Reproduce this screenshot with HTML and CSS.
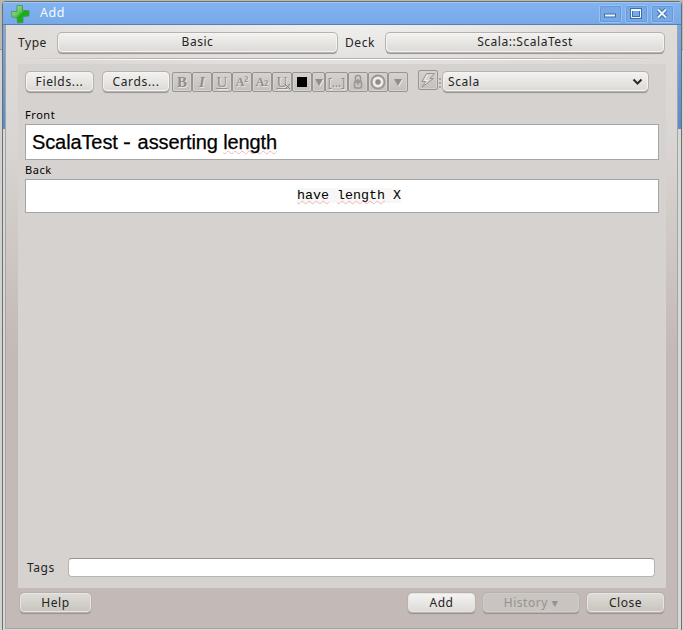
FILE: index.html
```html
<!DOCTYPE html>
<html lang="en">
<head>
<meta charset="utf-8">
<title>Add</title>
<link rel="stylesheet" href="styles.css">
</head>
<body>
<main class="window">
  <header class="titlebar">
    <svg class="logo" width="20" height="20" viewBox="0 0 20 20">
      <defs><linearGradient id="plus" x1="0" y1="0" x2="1" y2="1"><stop offset="0" stop-color="#b5e8a4"/><stop offset=".42" stop-color="#65c65c"/><stop offset=".55" stop-color="#14ae14"/><stop offset="1" stop-color="#38ad38"/></linearGradient></defs>
      <path d="M7 1.500H12.500V6.500L19 6.700V12L13 12.500V18.500L7.500 19 7 13.500 2 13 1.500 7.500H7Z" fill="url(#plus)" stroke="#48914b" stroke-width=".8"/>
    </svg>
    <h1 class="title">Add</h1>
    <div class="controls">
      <button class="control" aria-label="Minimize"><svg width="22" height="17"><path d="M5 10.500H17" stroke="#416cab" stroke-width="4"/><path d="M6 10.500H16" stroke="#edf5ff" stroke-width="2"/></svg></button>
      <button class="control" aria-label="Maximize"><svg width="22" height="17" fill="none"><rect x="6.500" y="4.500" width="9" height="8" stroke="#416cab" stroke-width="3"/><path d="M6.500 4V12.500H15.500V4" stroke="#edf5ff"/><path d="M6 5H16" stroke="#edf5ff" stroke-width="2"/></svg></button>
      <button class="control" aria-label="Close window"><svg width="22" height="17" fill="none"><path d="M7 4.500 15 12.500M15 4.500 7 12.500" stroke="#416cab" stroke-width="4"/><path d="M7 4.500 15 12.500M15 4.500 7 12.500" stroke="#edf5ff" stroke-width="2"/></svg></button>
    </div>
  </header>
  <div class="client">
    <div class="choosers">
      <span class="type-label">Type</span><button class="button type">Basic</button>
      <span class="deck-label">Deck</span><button class="button deck">Scala::ScalaTest</button>
    </div>
    <hr class="rule">
    <section class="editor">
      <div class="toolbar">
        <button class="button fields">Fields...</button><button class="button cards">Cards...</button>
        <div class="tools">
          <button class="tool bold">B</button>
          <button class="tool italic">I</button>
          <button class="tool underline">U</button>
          <button class="tool script">A<sup>2</sup></button>
          <button class="tool script">A<sub>2</sub></button>
          <button class="tool underline">U<svg class="clear" width="7" height="7"><path d="M1 1 6 6M6 1 1 6" stroke="#858280"/></svg></button>
          <button class="tool"><span class="swatch"></span></button>
          <button class="tool narrow"><span class="arrow"></span></button>
          <button class="tool cloze">[...]</button>
          <button class="tool"><svg width="12" height="16" fill="none" stroke="#999693" stroke-width="1.500"><rect x="3.500" y="1.500" width="5" height="7" rx="2"/><rect x="2.500" y="7" width="7" height="7" rx="2"/><path d="M6 5V11"/></svg></button>
          <button class="tool"><svg width="18" height="18"><circle cx="9" cy="9" r="6.500" fill="#eeecea" stroke="#999693" stroke-width="2"/><circle cx="9" cy="9" r="2.700" fill="#8f8c89"/></svg></button>
          <button class="tool"><span class="arrow"></span></button>
        </div>
        <button class="tool bolt"><svg width="18" height="18"><path d="M7.500 2.500H15.500L11 7.500H14.500L3 16 7 10.500H3Z" fill="#d6d3cf" stroke="#999693"/><path d="M8.500 4 5.500 9.500H9L6 13" fill="none" stroke="#efedeb"/></svg></button>
        <span class="grip"></span>
        <button class="button combo">Scala<svg width="11" height="8"><path d="M1.500 1.500 5.500 5.500 9.500 1.500" fill="none" stroke="#2b2b2b" stroke-width="2"/></svg></button>
      </div>
      <label class="field-label">Front</label>
      <div class="field front">ScalaTest <span class="dash">-</span> asserting <span class="misspelt">length</span></div>
      <label class="field-label back-label">Back</label>
      <div class="field back"><span class="code"><span class="misspelt">have</span> <span class="misspelt">length</span> X</span></div>
      <div class="tags"><label for="tags">Tags</label><input id="tags"></div>
    </section>
    <footer class="actions">
      <button class="button help">Help</button>
      <button class="button add">Add</button>
      <button class="button history">History <span class="small">▾</span></button>
      <button class="button close">Close</button>
    </footer>
  </div>
</main>
</body>
</html>
```
FILE: styles.css
```css
* { box-sizing: border-box; }
body {
  margin: 0;
  width: 683px;
  height: 630px;
  overflow: hidden;
  padding: 1px 2px 0;
  background: linear-gradient(#b9b9b4 0 49px, #919191 49px 50px, #d2d2d2 50px);
  font: 12px "Noto Sans", sans-serif;
  letter-spacing: .55px;
  color: #242424;
}
button { font: inherit; letter-spacing: inherit; color: inherit; padding: 0; }
svg { display: block; flex: none; }
.window {
  width: 680px;
  height: 629px;
  border: 1px solid #69716f;
  border-bottom: 0;
  border-radius: 4px 4px 0 0;
  padding: 0 3px 0 2px;
  background: linear-gradient(#7eb1ee 0, #78a9e7 24px, #568bd0 127px, #d8d8d8 127px);
}
.titlebar {
  height: 23px;
  margin: 0 -3px 0 -2px;
  padding: 0 7px 0 7px;
  display: flex;
  align-items: center;
  border-top: 1px solid #a0c8f7;
  border-bottom: 1px solid #557fbb;
  background: linear-gradient(#80b3ef, #78a9e7);
}
.title { margin: -1px 0 0 10px; font-size: 12.5px; font-weight: 400; color: #f5faff; line-height: 20px; }
.controls { margin-left: auto; display: flex; gap: 3px; }
.control { width: 23px; height: 18px; border: 1px solid #9ac1f1; border-radius: 2px; background: #78a9e7; outline: 1px solid #6998d8; outline-offset: -2px; }
.control svg { margin: -1px 0 0 -1px; }
.client {
  height: 604px;
  border: 1px solid #a6a4a3;
  border-top: 0;
  padding: 7px 11px 0 12px;
  background: radial-gradient(ellipse 340px 54px at 50% 0, #f0efee, transparent), linear-gradient(#dedbd9 0, #d9d5d2 120px, #c3b9b6 330px, #c3b9b6);
}
.choosers { display: flex; align-items: center; height: 20px; }
.type-label { width: 40px; }
.deck-label { width: 41px; margin-left: 8px; }
.button {
  height: 19px;
  border: 1px solid #f5f4f2;
  border-radius: 4px;
  background: linear-gradient(#f2f1ef, #dddbd7);
  box-shadow: 0 0 0 1px #b6b2af, 0 2px 1px #96928f;
  line-height: 16px;
  text-align: center;
  white-space: nowrap;
}
.type { width: 279px; }
.deck { width: 278px; }
.rule { margin: 6px 0 4px; border: 0; height: 2px; background: linear-gradient(#b9aeab 50%, #fff 50%); -webkit-mask-image: linear-gradient(90deg, transparent, #000 20%, #000 80%, transparent); }
.editor { width: 648px; height: 524px; padding: 7px 7px 0; background: #d6d2cf; display: flex; flex-direction: column; }
.toolbar { display: flex; height: 22px; }
.fields { width: 67px; margin-left: 1px; }
.cards { width: 66px; margin-left: 10px; }
.fields, .cards { margin-top: 1px; letter-spacing: .65px; }
.tools { display: flex; margin: 1px 0 0 3px; height: 20px; }
.tool {
  width: 20px;
  height: 20px;
  position: relative;
  display: flex;
  justify-content: center;
  align-items: center;
  border: 1px solid #999592;
  border-radius: 2px;
  background: linear-gradient(#d5d2cf, #c4c0bb);
  box-shadow: inset 0 0 0 1px #d5d2cf;
  font: 15px "Liberation Serif", serif;
  letter-spacing: 0;
  color: #918e8b;
  text-shadow: 1px 1px #e8e6e3;
}
.bold { font-weight: 700; }
.italic { font-style: italic; font-weight: 700; }
.underline { text-decoration: underline; }
.script { font-size: 12px; font-weight: 700; }
.script sup, .script sub { font-size: 8px; line-height: 8px; }
.script sup { margin-bottom: 4px; }
.script sub { margin-top: 4px; }
.clear { position: absolute; right: 0; bottom: 1px; }
.swatch { width: 10px; height: 10px; background: #000; }
.narrow { width: 13px; }
.arrow { border: 4px solid transparent; border-top: 7px solid #918e8b; border-bottom: 0; filter: drop-shadow(1px 1px #e8e6e3); }
.cloze { width: 23px; font: 12px "Noto Sans", sans-serif; }
.bolt { margin: -1px 0 0 10px; }
.grip { width: 2px; height: 10px; margin: 7px 3px 0 1px; background: repeating-linear-gradient(#aaa6a3 0 2px, transparent 2px 4px); }
.combo { width: 205px; margin-left: -1px; margin-top: 1px; height: 19px; padding: 0 4px; display: flex; align-items: center; justify-content: space-between; }
.field-label { color: #000; font-size: 11px; line-height: 14px; margin-top: 15px; height: 16px; }
.field { width: 634px; background: #fff; border: 1px solid #a5a5a5; color: #000; letter-spacing: 0; }
.front { height: 36px; padding-left: 6px; font: 20px/34px "Liberation Sans", sans-serif; letter-spacing: -.11px; -webkit-text-stroke: .25px #000; }
.dash { display: inline-block; width: 9px; transform: scaleX(1.2); transform-origin: left; }
.back-label { margin-top: 3px; }
.back { height: 34px; padding-left: 14px; text-align: center; font: 13.33px/31px "Liberation Mono", monospace; }
.code { background: #f7f7f7; }
.misspelt { text-decoration: underline wavy #f3b4b4 1px; text-underline-offset: 1px; text-decoration-skip-ink: none; }
.tags { margin: auto 4px 10px 2px; display: flex; align-items: center; height: 21px; }
.tags label { width: 41px; }
.tags input { flex: 1; min-width: 0; height: 19px; padding: 0 4px; border: 1px solid #b8b5b2; border-top-color: #969390; border-radius: 4px; background: #fff; }
.actions { display: flex; width: 648px; padding: 5px 2px 0 2px; }
.actions .button { background: linear-gradient(#dedbd8, #c9c5bd); border-color: #e7e4e1; height: 19px; line-height: 16px; }
.help { width: 71px; }
.actions .add { width: 67px; margin-left: auto; background: linear-gradient(#f4f3f2, #dedcd8); }
.actions .history { width: 96px; margin-left: 8px; color: #96928e; background: #c9c4c0; border-color: #d1ccc9; }
.small { font: 12px "DejaVu Sans", sans-serif; }
.close { width: 77px; margin-left: 8px; }
```
